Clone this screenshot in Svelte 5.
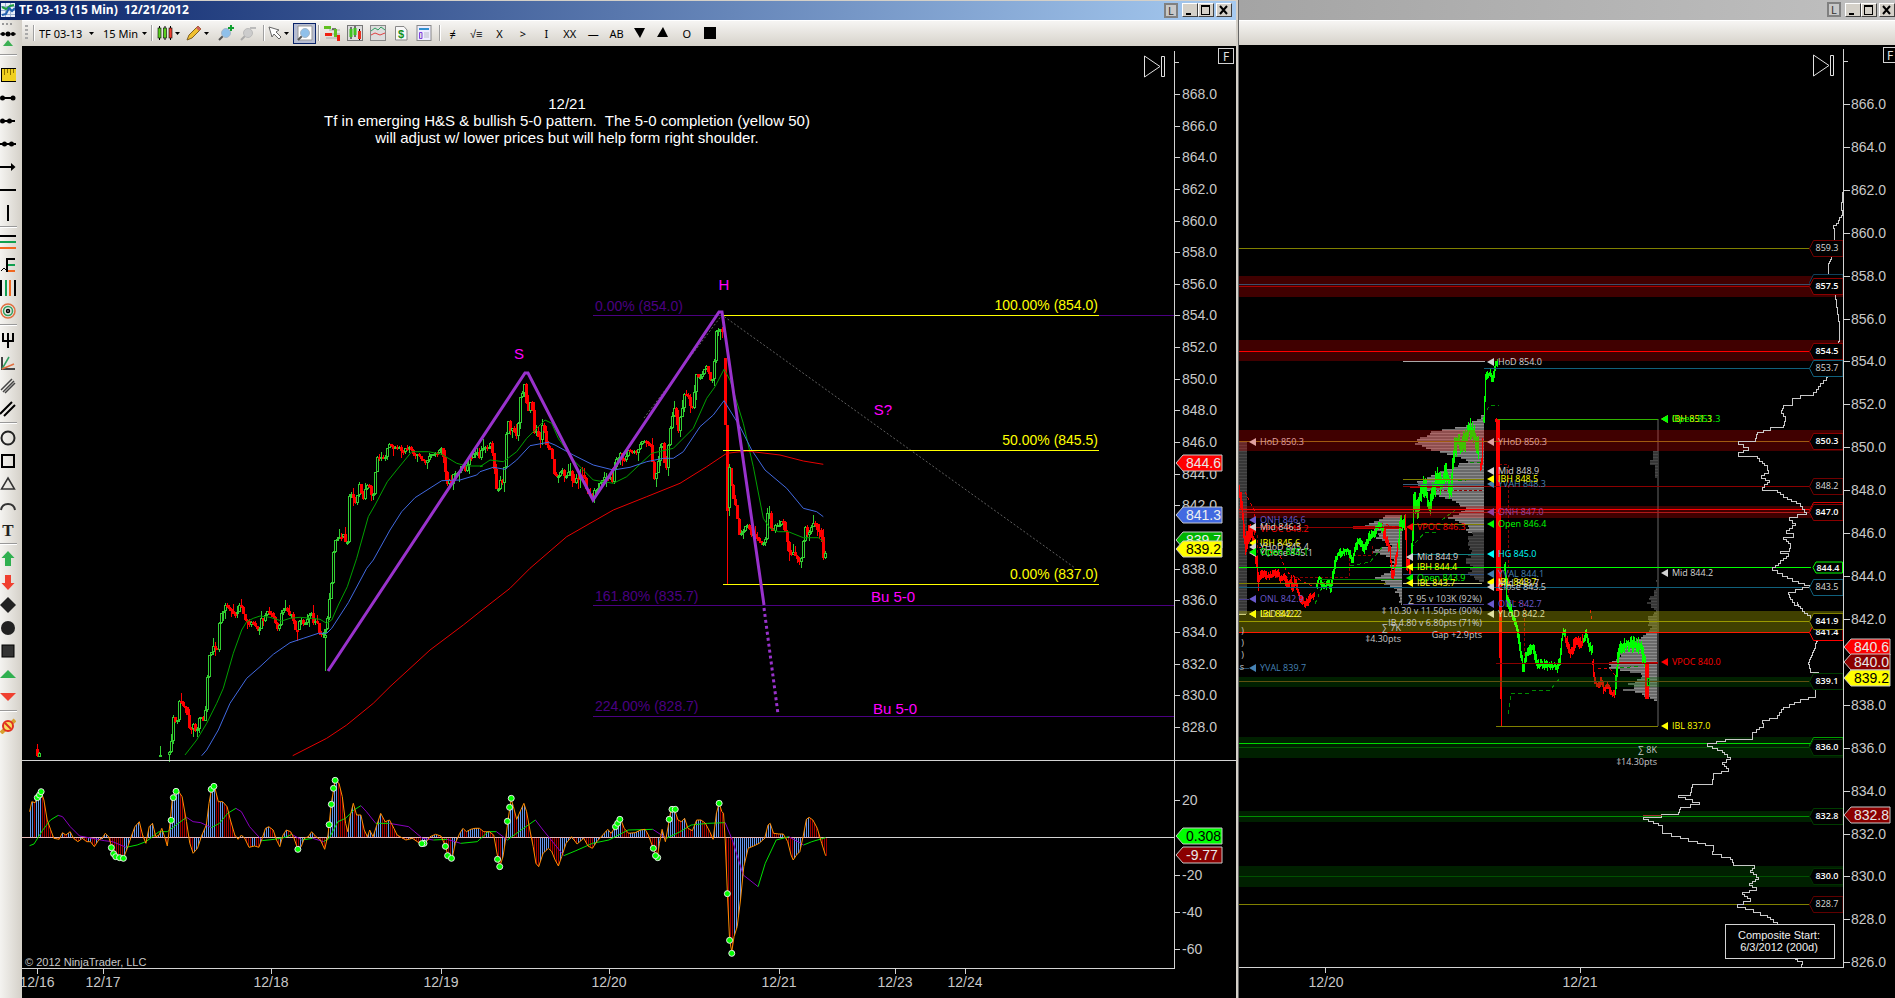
<script>
  // ---------- helpers ----------
  const at = (ox, oy, sx, sy, flat) => {
    const out = [];
    for (let i = 0; i < flat.length; i += 2) out.push([ox + flat[i] / sx, oy + flat[i + 1] / sy]);
    return out;
  };
  const poly = (pts) => pts.map((p) => p[0].toFixed(1) + ',' + p[1].toFixed(1)).join(' ');
  const lerp = (pts, x) => {
    if (x <= pts[0][0]) return pts[0][1];
    for (let i = 1; i < pts.length; i++) {
      if (x <= pts[i][0]) {
        const [a, b] = pts[i - 1];
        const [c, d] = pts[i];
        return c === a ? d : b + ((d - b) * (x - a)) / (c - a);
      }
    }
    return pts[pts.length - 1][1];
  };
  let seed = 7;
  const rnd = () => {
    seed = (seed * 16807) % 2147483647;
    return seed / 2147483647;
  };

  // ---------- 15 minute candles ----------
  const rally = at(130, 420, 3, 3, [
    118, 1005, 122, 1000, 125, 955, 128, 890, 132, 885, 137, 905, 142, 900, 148, 840, 152, 835, 158, 865, 166, 855, 172, 880, 178, 925,
    184, 935, 190, 912, 197, 935, 204, 925, 210, 890, 216, 885, 222, 912, 228, 855, 232, 770, 238, 700, 244, 705, 250, 675, 256, 675,
    262, 695, 268, 605, 276, 580, 286, 560, 292, 555, 300, 575, 308, 575, 318, 588, 326, 555, 332, 555, 340, 580, 347, 605, 360, 610,
    370, 615, 380, 632, 388, 630, 394, 600, 404, 595, 414, 570, 420, 590, 427, 565, 434, 605, 442, 625, 450, 605, 456, 572, 466, 560,
    476, 575, 486, 590, 494, 620, 502, 630, 508, 600, 516, 595, 522, 612, 530, 600, 540, 580, 548, 590, 553, 620, 560, 590, 567, 630,
    574, 635, 580, 645, 584, 645, 590, 600, 597, 580, 600, 485, 606, 480, 608, 430, 612, 385, 618, 355, 626, 365, 632, 350, 640, 345,
    644, 375, 650, 370, 655, 350, 659, 215, 668, 215, 674, 255, 680, 255, 684, 200, 692, 200, 700, 240, 708, 200, 714, 197, 722, 205,
    727, 258, 732, 200, 738, 150, 743, 115, 750, 110, 758, 112, 766, 110, 772, 90, 780, 62, 788, 90, 796, 80, 806, 85, 820, 90, 834, 80,
    846, 90, 856, 105, 866, 112, 876, 115, 885, 122, 893, 115, 900, 100, 912, 100, 925, 100, 937, 85, 941, 110, 947, 160, 953, 190,
    960, 180, 966, 205, 972, 150, 980, 160, 988, 150, 996, 130, 1006, 155, 1014, 130, 1022, 110, 1030, 110, 1040, 95, 1050, 110, 1060, 80,
    1070, 90, 1079, 80
  ]);
  const topping = at(480, 280, 3, 3, [
    5, 520, 15, 500, 22, 520, 32, 495, 40, 520, 45, 590, 52, 635, 60, 600, 66, 620, 72, 580, 80, 450, 84, 420, 92, 455, 100, 445, 108, 470,
    116, 435, 120, 350, 126, 345, 132, 290, 136, 345, 144, 400, 150, 355, 158, 400, 164, 460, 172, 455, 180, 485, 188, 430, 194, 455,
    200, 505, 208, 500, 216, 520, 224, 585, 232, 585, 246, 575, 258, 585, 270, 570, 280, 605, 290, 600, 302, 590, 312, 590, 322, 630,
    334, 650, 346, 625, 360, 615, 372, 600, 386, 590, 398, 600, 408, 540, 420, 525, 434, 545, 448, 510, 460, 520, 472, 520, 482, 490,
    492, 485, 502, 480, 512, 500, 520, 560, 524, 600, 532, 570, 540, 510, 546, 470, 552, 540, 558, 575, 563, 520, 568, 470, 574, 430,
    580, 380, 588, 400, 596, 450, 604, 400, 612, 350, 622, 345, 632, 380, 640, 375, 648, 290, 656, 290, 664, 285, 672, 265, 680, 260,
    688, 285, 696, 300, 702, 280, 708, 150, 716, 145, 724, 155, 730, 150
  ]);
  const decline = at(480, 280, 3, 3, [
    748, 560, 756, 620, 762, 670, 770, 690, 778, 770, 786, 760, 794, 745, 804, 740, 812, 760, 822, 765, 832, 775, 846, 785, 856, 780,
    860, 705, 868, 700, 876, 750, 886, 740, 896, 735, 906, 715, 914, 745, 924, 790, 932, 830, 942, 820, 952, 835, 962, 845, 968, 810,
    974, 740, 984, 760, 994, 735, 1004, 730, 1014, 750, 1022, 760, 1028, 780, 1031, 850, 1036, 820
  ]);
  const candles = [];
  const addCandles = (pts) => {
    let prev = pts[0][1];
    const end = pts[pts.length - 1][0];
    for (let x = Math.round(pts[0][0]); x <= end; x += 2) {
      const c = lerp(pts, x + 0.5) + (rnd() - 0.5) * 5;
      const top = Math.round(Math.min(prev, c));
      const bot = Math.max(top + 2, Math.round(Math.max(prev, c)));
      const w1 = rnd() < 0.4 ? rnd() * 9 : rnd() * 2;
      const w2 = rnd() < 0.4 ? rnd() * 9 : rnd() * 2;
      candles.push({ x, top, bot, hi: Math.round(top - w1), lo: Math.round(bot + w2), up: c <= prev });
      prev = c;
    }
  };
  addCandles(rally);
  addCandles([rally[rally.length - 1], ...topping]);
  addCandles(decline);
  candles.push({ x: 725, top: 358, bot: 425, hi: 358, lo: 425, up: false });
  candles.push({ x: 727, top: 425, bot: 511, hi: 425, lo: 584, up: false });
  candles.push({ x: 729, top: 467, bot: 508, hi: 464, lo: 516, up: true });
  candles.push({ x: 325, top: 635, bot: 638, hi: 630, lo: 671, up: true });
  candles.push({ x: 37, top: 749, bot: 756, hi: 744, lo: 757, up: false });
  candles.push({ x: 39, top: 753, bot: 757, hi: 752, lo: 757, up: true });
  candles.push({ x: 160, top: 755, bot: 757, hi: 746, lo: 757, up: true });

  const fast = [
    ...at(130, 420, 3, 3, [165, 1005, 200, 960, 230, 910, 260, 850, 280, 805, 310, 700, 335, 630, 350, 605, 370, 595, 390, 588, 420, 592, 455, 603, 480, 595, 510, 592, 545, 595, 570, 598, 590, 610, 605, 600, 625, 555, 652, 500, 680, 415, 715, 290, 735, 255, 772, 185, 800, 150, 845, 95, 895, 95, 935, 103, 980, 130, 1010, 138, 1058, 138]),
    ...at(480, 280, 3, 3, [0, 560, 30, 540, 70, 545, 110, 515, 140, 475, 195, 420, 215, 430, 235, 475, 280, 540, 340, 600, 400, 610, 440, 590, 515, 520, 580, 505, 640, 445, 680, 355, 705, 320, 732, 268, 750, 300, 790, 430, 820, 560, 850, 715, 870, 745, 895, 755, 925, 755, 970, 773, 1015, 773, 1030, 785])
  ];
  const mid = [
    ...at(130, 420, 3, 3, [215, 1007, 230, 990, 265, 930, 300, 850, 350, 775, 390, 740, 430, 703, 480, 668, 520, 655, 565, 640, 590, 640, 605, 625, 655, 548, 710, 445, 730, 420, 780, 330, 815, 275, 855, 233, 935, 182, 990, 180, 1040, 165]),
    ...at(480, 280, 3, 3, [0, 575, 40, 562, 75, 568, 110, 540, 150, 497, 205, 487, 225, 495, 280, 525, 340, 555, 400, 570, 450, 562, 500, 545, 550, 535, 580, 535, 610, 515, 660, 440, 700, 405, 732, 362, 780, 440, 815, 510, 855, 570, 920, 625, 970, 685, 1010, 695, 1030, 710])
  ];
  const slow = [
    ...at(130, 420, 3, 3, [488, 1007, 590, 955, 650, 915, 730, 850, 780, 800, 900, 690, 1000, 615]),
    ...at(480, 280, 3, 3, [0, 995, 90, 925, 150, 865, 260, 770, 400, 690, 500, 650, 600, 610, 680, 560, 740, 520, 800, 513, 900, 525, 970, 543, 1030, 553])
  ];

  // ---------- oscillator ----------
  const osc = at(0, 760, 1.823, 3, [
    54, 155, 58, 125, 64, 128, 68, 115, 75, 95, 80, 120, 86, 180, 92, 208, 98, 235, 108, 238, 114, 218, 120, 225, 128, 215, 134, 235,
    142, 245, 150, 235, 158, 245, 165, 245, 172, 260, 180, 240, 186, 235, 192, 220, 198, 230, 204, 262, 210, 290, 218, 293, 225, 295,
    232, 265, 238, 235, 246, 200, 254, 185, 260, 225, 266, 250, 272, 200, 278, 190, 284, 230, 290, 225, 295, 205, 300, 230, 305, 258,
    310, 190, 314, 120, 320, 95, 326, 95, 332, 110, 340, 185, 346, 250, 352, 280, 360, 265, 368, 225, 376, 195, 381, 130, 386, 85,
    392, 85, 398, 125, 406, 125, 414, 140, 420, 180, 428, 225, 434, 238, 440, 225, 446, 235, 454, 262, 464, 258, 472, 262, 478, 235,
    484, 205, 490, 200, 498, 210, 504, 240, 510, 260, 516, 225, 522, 210, 530, 215, 536, 235, 543, 268, 549, 260, 555, 235, 562, 230,
    568, 215, 576, 230, 584, 240, 592, 268, 598, 225, 604, 130, 611, 62, 618, 70, 624, 110, 630, 190, 634, 215, 638, 170, 644, 130,
    650, 165, 658, 165, 664, 210, 670, 230, 674, 210, 680, 230, 686, 200, 694, 160, 702, 185, 710, 180, 718, 205, 724, 225, 740, 240,
    752, 235, 765, 250, 776, 248, 784, 230, 794, 223, 804, 228, 812, 258, 817, 290, 824, 297, 830, 250, 838, 220, 844, 205, 850, 215,
    858, 208, 866, 205, 874, 205, 882, 215, 892, 215, 900, 225, 908, 298, 911, 320, 917, 290, 922, 235, 926, 180, 932, 118, 936, 140,
    942, 178, 948, 155, 955, 130, 960, 155, 966, 210, 972, 260, 977, 310, 982, 320, 990, 280, 1000, 265, 1006, 275, 1012, 300, 1018, 318,
    1024, 290, 1032, 250, 1042, 230, 1052, 252, 1064, 235, 1072, 258, 1080, 265, 1088, 245, 1096, 230, 1108, 208, 1114, 220, 1120, 205,
    1126, 185, 1132, 180, 1138, 205, 1146, 220, 1158, 218, 1168, 210, 1176, 208, 1182, 225, 1190, 262, 1198, 295, 1202, 250, 1207, 208,
    1213, 245, 1218, 200, 1223, 150, 1230, 150, 1236, 180, 1242, 185, 1248, 175, 1254, 205, 1262, 212, 1270, 180, 1278, 180, 1286, 190,
    1294, 215, 1300, 238, 1306, 160, 1311, 130, 1316, 155, 1319, 160, 1322, 240, 1326, 400, 1330, 540, 1334, 575, 1338, 530, 1344, 500,
    1350, 420, 1356, 320, 1364, 265, 1374, 258, 1384, 250, 1394, 235, 1400, 195, 1404, 190, 1410, 220, 1420, 222, 1428, 222, 1436, 245,
    1442, 285, 1446, 300, 1452, 285, 1458, 275, 1464, 230, 1470, 178, 1475, 172, 1482, 180, 1490, 205, 1498, 250, 1505, 287
  ]);
  const bars = [];
  for (let x = 30; x <= 826; x += 2) {
    const y = lerp(osc, x + 0.5);
    const falling = y - lerp(osc, x - 1.5) > 0.2;
    bars.push({ x, y: Math.round(Math.min(y, 838)), h: Math.max(1, Math.round(Math.abs(y - 838))), falling });
  }
  const signal = at(0, 760, 1.823, 3, [
    54, 257, 62, 252, 78, 210, 92, 180, 106, 166, 114, 170, 128, 200, 145, 228, 168, 235, 190, 242, 205, 245, 230, 262, 250, 255, 266, 245,
    290, 215, 305, 215, 325, 190, 340, 172, 352, 185, 366, 188, 385, 203, 400, 190, 415, 160, 430, 145, 440, 155, 455, 200, 478, 242,
    500, 238, 520, 232, 532, 223, 550, 240, 570, 235, 590, 245, 600, 235, 616, 185, 630, 175, 645, 150, 658, 137, 668, 155, 685, 190,
    710, 190, 745, 200, 770, 235, 790, 240, 815, 238, 840, 250, 870, 245, 890, 215, 905, 215, 925, 240, 950, 210, 976, 180, 990, 210,
    1028, 287, 1050, 272, 1080, 250, 1110, 240, 1145, 210, 1190, 208, 1215, 235, 1240, 215, 1260, 195, 1290, 190, 1322, 188, 1335, 240,
    1355, 345, 1382, 380, 1395, 310, 1415, 240, 1438, 230, 1465, 255, 1480, 245, 1505, 233
  ]);
  const dots = at(0, 760, 1.823, 3, [
    68, 113, 72, 105, 75, 95, 203, 263, 207, 281, 211, 290, 218, 293, 225, 295, 312, 181, 316, 113, 321, 94, 385, 88, 390, 79, 543, 268,
    600, 194, 604, 133, 608, 85, 611, 61, 773, 250, 769, 251, 812, 259, 816, 287, 823, 295, 907, 298, 911, 320, 925, 184, 929, 142,
    932, 115, 1122, 200, 1126, 190, 1130, 178, 1199, 293, 1191, 265, 1195, 287, 1220, 178, 1225, 148, 1231, 148, 1311, 130, 1326, 401,
    1330, 541, 1334, 580
  ]);

  const leftY = (p) => Math.round(94 + (868 - p) * 15.82);
  const leftTicks = Array.from({ length: 21 }, (_, i) => 868 - i * 2).filter((p) => p !== 840);
  const oscTicks = [[20, 800], [-20, 875], [-40, 912], [-60, 949]];
  const leftDates = [['12/16', 37], ['12/17', 103], ['12/18', 271], ['12/19', 441], ['12/20', 609], ['12/21', 779], ['12/23', 895], ['12/24', 965]];
  const leftMarks = [
    ['844.6', 463, '#ff0000', '#e8e8e8'], ['841.3', 515, '#4169e1', '#f0f0f0'], ['839.7', 540, '#00b400', '#f0f0f0'],
    ['839.2', 549, '#ffff00', '#000'], ['0.308', 836, '#00ff00', '#000'], ['-9.77', 855, '#8b0000', '#e8e8e8']
  ];

  // ---------- profile chart ----------
  const rightY = (p) => Math.round(104 + (866 - p) * 21.457);
  const rightTicks = Array.from({ length: 21 }, (_, i) => 866 - i * 2).filter((p) => p !== 840);
  const bands = [
    [276, 21, '#ff0000'], [340, 21, '#ff0000'], [430, 21, '#ff0000'], [506, 12, '#ff0000'], [611, 21, '#ffff00'],
    [677, 10, '#008000'], [737, 21, '#008000'], [811, 11, '#008000'], [866, 21, '#008000']
  ];
  const levels = [
    [248, '#808000', 1239], [284, '#3d4f6b', 1239], [286, '#a80000', 1239], [351, '#ff0000', 1239], [368, '#10607c', 1484],
    [361, '#a8a8a8', 1403, 1485], [441, '#a05a10', 1239], [486, '#8b0000', 1403], [509, '#ff0000', 1239], [512, '#b01818', 1239],
    [567, '#00ff00', 1239], [587, '#10607c', 1239], [621, '#9a9a00', 1239], [632, '#ff1800', 1239], [681, '#605010', 1239],
    [743, '#00d800', 1239], [747, '#005800', 1239], [816, '#009000', 1239], [876, '#005000', 1239], [904, '#808000', 1239],
    [419, '#32b400', 1498, 1658], [527, '#8b0000', 1255, 1402], [583, '#808000', 1239, 1386], [579, '#008000', 1320, 1402],
    [479, '#808000', 1403, 1484], [484, '#3a5f80', 1403, 1484], [524, '#808000', 1411, 1484], [554, '#108080', 1411, 1484],
    [574, '#2f4f80', 1403, 1484], [583, '#c8c890', 1403, 1482], [604, '#483d8b', 1403, 1484], [663, '#8b0000', 1496, 1658],
    [726, '#808000', 1496, 1658], [599, '#483d8b', 1239, 1249], [614, '#d0d080', 1239, 1246], [668, '#27506e', 1239, 1249]
  ];
  const tags = [
    ['857.5', 282, '#10405c'], ['859.3', 248, '#700000'], ['857.5', 286, '#8b0000', 1], ['853.7', 368, '#10607c'], ['854.5', 351, '#8b0000', 1],
    ['850.3', 441, '#8b0000', 1], ['848.2', 486, '#700000'], ['847.0', 510, '#d00000'], ['847.0', 512, '#8b0000', 1], ['843.5', 587, '#10607c'],
    ['841.4', 632, '#ff0000', 1], ['841.9', 621, '#808000', 1], ['839.1', 681, '#003c00', 1], ['836.0', 745, '#00a000'], ['836.0', 747, '#003800', 1],
    ['832.8', 816, '#003c00', 1], ['830.0', 876, '#003000', 1], ['828.7', 904, '#600000']
  ];
  const rightMarks = [
    ['840.6', 647, '#ff0000', '#e8e8e8'], ['840.0', 662, '#8b0000', '#e8e8e8'], ['839.2', 678, '#ffff00', '#000'], ['832.8', 815, '#8b0000', '#e8e8e8']
  ];
  const silver = '#d3d3d3', slate = '#6a5acd', steel = '#4682b4', lime = '#00ff00', yel = '#ffff00', red = '#ff0000';
  const notes = [
    [1249, 'HoD 850.3', 442, '#e0a0a0'], [1249, 'ONH 846.6', 520, slate], [1249, 'VPOC 846.2', 529, red], [1249, 'Mid 846.3', 527, silver],
    [1249, 'IBH 845.6', 543, yel], [1249, 'YHoD 845.4', 547, silver], [1249, 'YClose 845.1', 553, silver], [1249, 'Open 845.1', 552, lime],
    [1249, 'ONL 842.9', 599, slate], [1249, 'LoD 842.2', 614, '#e0e0a0'], [1249, 'IBL 842.2', 614, yel], [1249, 'YVAL 839.7', 668, steel],
    [1406, 'VPOC 846.3', 527, red], [1406, 'Mid 844.9', 557, silver], [1406, 'IBH 844.4', 567, yel], [1406, 'Open 843.9', 578, lime], [1406, 'IBL 843.7', 583, yel],
    [1487, 'HoD 854.0', 362, silver], [1487, 'YHoD 850.3', 442, '#e0a0a0'], [1487, 'Mid 848.9', 471, silver], [1487, 'YVAH 848.3', 484, steel],
    [1487, 'IBH 848.5', 479, yel], [1487, 'ONH 847.0', 512, '#9040a0'], [1487, 'Open 846.4', 524, lime], [1487, 'HG 845.0', 554, '#00ffff'],
    [1487, 'YVAL 844.1', 574, steel], [1487, 'Mid 843.7', 583, silver], [1487, 'IBL 843.7', 582, yel], [1487, 'Close 843.5', 587, silver],
    [1487, 'ONL 842.7', 604, slate], [1487, 'YLoD 842.2', 614, '#e0e0a0'],
    [1661, 'IBH 851.3', 419, yel], [1661, 'Open 851.3', 419, lime], [1661, 'Mid 844.2', 573, silver], [1661, 'VPOC 840.0', 662, red], [1661, 'IBL 837.0', 726, yel]
  ];
  const stats = [
    ['∑ 95 v 103K (92%)', 1482, 599], ['‡ 10.30 v 11.50pts (90%)', 1482, 611], ['IB 4.80 v 6.80pts (71%)', 1482, 623], ['Gap +2.9pts', 1482, 635],
    ['∑ 7K', 1401, 628], ['‡4.30pts', 1401, 639], ['∑ 8K', 1657, 750], ['‡14.30pts', 1657, 762], [')', 1244, 631], [')', 1244, 643], [')', 1244, 655], ['s', 1244, 667]
  ];
  const shape = (edge, ox, oy, flat) => {
    const pts = at(ox, oy, 3, 3, flat);
    const byY = pts.map((p) => [p[1], p[0]]);
    let d = `M${edge} ${byY[0][0].toFixed(0)}`;
    for (let y = Math.round(byY[0][0]); y <= byY[byY.length - 1][0]; y += 2) {
      d += `H${Math.min(edge, Math.round(lerp(byY, y) + (rnd() - 0.5) * 5))}V${y + 2}`;
    }
    return d + `H${edge}Z`;
  };
  const profiles = [
    [shape(1402, 1235, 400, [455, 345, 440, 350, 425, 360, 400, 372, 390, 380, 430, 390, 435, 400, 425, 410, 455, 420, 465, 435, 400, 450, 440, 460, 470, 475, 470, 490, 475, 505, 450, 520, 410, 530, 440, 540, 455, 550, 475, 560, 493, 590, 498, 615]), 'url(#grey)'],
    [shape(1484, 1235, 400, [740, 45, 715, 65, 670, 80, 600, 90, 570, 105, 540, 125, 570, 140, 620, 155, 660, 165, 700, 180, 650, 200, 570, 230, 545, 250, 560, 265, 600, 280, 650, 300, 690, 320, 680, 335, 640, 348, 660, 360, 690, 372, 705, 395]), 'url(#grey)'],
    [shape(1484, 1235, 400, [705, 396, 710, 400, 695, 430, 712, 450, 692, 480, 715, 500, 700, 520, 745, 545]), 'url(#dim)'],
    [shape(1658, 1600, 600, [172, -60, 168, -40, 150, -10, 150, 0, 145, 15, 165, 25, 150, 50, 150, 70, 155, 95]), 'url(#dim)'],
    [shape(1658, 1600, 600, [135, 100, 100, 120, 70, 135, 60, 150, 60, 170, 28, 187, 28, 200, 80, 210, 130, 220, 120, 235, 85, 250, 110, 260, 65, 268, 120, 275, 150, 295, 172, 300]), 'url(#grey)'],
    ['M1239 441H1247V614H1239Z', 'url(#dim)'],
    ['M1657 419H1659V726H1657Z', '#333'],
    ['M1653 451H1658V478H1655V465H1650V460H1653Z', 'url(#dim)']
  ];
  const ribbon = (flat, fat = 6) => {
    const pts = at(1235, 400, 3, 3, flat);
    let d = '';
    let prev = pts[0][1];
    for (let x = Math.round(pts[0][0]); x <= pts[pts.length - 1][0] + 0.5; x++) {
      const y = lerp(pts, x);
      const a = Math.min(prev, y) - 1 - rnd() * fat;
      const b = Math.max(prev, y) + 1 + rnd() * fat;
      d += `M${x + 0.5} ${a.toFixed(0)}V${b.toFixed(0)}`;
      prev = y;
    }
    return d;
  };
  const ribbons = [
    [ribbon([12, 280, 20, 330, 25, 400, 30, 440, 38, 390, 48, 410, 55, 450, 62, 480, 70, 565], 9), red],
    [ribbon([72, 530, 80, 520, 95, 530, 110, 525, 125, 515, 135, 540, 145, 530, 155, 555, 165, 540, 170, 570, 178, 540, 185, 570, 195, 600, 210, 610, 225, 590, 238, 585], 4), red],
    [ribbon([242, 560, 250, 530, 258, 555, 270, 560, 278, 540, 285, 570, 292, 520, 300, 480, 308, 460, 325, 455, 335, 450, 350, 480, 360, 440, 370, 420, 385, 450, 400, 410, 415, 400, 430, 375, 445, 395], 4), lime],
    [ribbon([445, 400, 455, 430, 462, 450, 470, 540, 480, 480, 487, 440], 5), red],
    [ribbon([488, 440, 494, 350, 502, 380, 507, 360], 7), lime],
    [ribbon([509, 360, 512, 480, 520, 500, 528, 540], 9), red],
    [ribbon([529, 450, 535, 280, 545, 340, 555, 280, 567, 250, 580, 330, 590, 280, 605, 230, 615, 260, 630, 210, 645, 280, 655, 150, 665, 120, 675, 150, 690, 115, 700, 85, 715, 100, 730, 150], 11), lime],
    [ribbon([736, 200, 740, 170, 742, 80], 4), red],
    [ribbon([744, 60, 747, 0, 750, -70, 762, -80, 770, -60, 780, -105, 787, -115], 3), lime],
    [ribbon([784, 60, 788, 110, 790, 150], 2), red],
    [ribbon([808, 500, 813, 600, 825, 630, 845, 690, 857, 770, 862, 810, 870, 770, 890, 740, 905, 790, 925, 795, 965, 800, 972, 780, 980, 700, 990, 700], 5), lime],
    [ribbon([990, 720, 1005, 760, 1020, 720, 1035, 735, 1043, 720], 6), red],
    [ribbon([1045, 720, 1052, 700, 1060, 740, 1070, 755], 5), lime],
    [ribbon([1072, 790, 1075, 840, 1085, 860, 1095, 840, 1105, 870, 1115, 855, 1125, 880, 1137, 880], 4), red],
    [ribbon([1139, 860, 1148, 750, 1165, 735, 1180, 735, 1200, 730, 1215, 740, 1222, 770, 1230, 790], 8), lime]
  ];
  const steps = (pts) => {
    let d = `M${pts[0][0].toFixed(0)} ${pts[0][1].toFixed(0)}`;
    for (let i = 1; i < pts.length; i++) {
      const n = Math.max(1, Math.round(Math.abs(pts[i][1] - pts[i - 1][1]) / 2.5));
      for (let k = 1; k <= n; k++) {
        const x = pts[i - 1][0] + ((pts[i][0] - pts[i - 1][0]) * k) / n;
        const y = pts[i - 1][1] + ((pts[i][1] - pts[i - 1][1]) * k) / n;
        d += `V${y.toFixed(0)}H${x.toFixed(0)}`;
      }
    }
    return d;
  };
  const composite = steps([
    [1843, 184], [1841, 205], [1842, 212], [1838, 220],
    ...at(1640, 220, 3, 3, [580, 15, 583, 40, 580, 60, 572, 110, 563, 130, 563, 165, 585, 220, 590, 260, 597, 310, 598, 340, 593, 370, 593, 415, 558, 472, 540, 490, 520, 515, 480, 525, 455, 535, 455, 548, 430, 555, 422, 570, 435, 588, 430, 615, 390, 622, 350, 635, 345, 655, 295, 662, 325, 680, 295, 697, 350, 708, 380, 735, 383, 750, 362, 765, 388, 780, 365, 800, 410, 810, 440, 830, 480, 850, 497, 875, 447, 890, 465, 908, 438, 930, 460, 940, 430, 950, 450, 970, 447, 985, 420, 992, 445, 1000, 420, 1020, 415, 1030, 395, 1042, 440, 1068, 508, 1095, 445, 1115, 450, 1130, 470, 1155]),
    ...at(1600, 600, 3, 3, [590, 5, 605, 25, 630, 45, 650, 115, 640, 150, 625, 185, 630, 205, 655, 215, 645, 240, 645, 285, 600, 297, 550, 320, 530, 345, 485, 360, 490, 375, 455, 395, 455, 408, 375, 418, 320, 430, 365, 450, 390, 470, 365, 485, 385, 505, 340, 520, 335, 545, 275, 552, 270, 575, 235, 585, 298, 605, 240, 620, 235, 635, 130, 650, 160, 662, 185, 675, 185, 690, 240, 708, 290, 722, 340, 735, 335, 752, 390, 770, 400, 785, 462, 795, 450, 810, 475, 830, 447, 850, 467, 862, 425, 875, 450, 895, 410, 912, 460, 928, 500, 945, 530, 965, 535, 975, 560, 1020, 590, 1078, 605, 1082, 600, 1100])
  ]);

  const rail = [
    ['Ruler', 'ruler'], ['Line', 'seg'], ['Ray', 'ray'], ['Extended line', 'ext'], ['Arrow line', 'arrow'], ['Horizontal line', 'hline'], ['Vertical line', 'vline'], null,
    ['Fibonacci retracements', 'fibr'], ['Fibonacci extensions', 'fibe'], ['Fibonacci time', 'fibt'], ['Fibonacci circle', 'fibc'], null,
    ['Pitchfork', 'fork'], ['Gann fan', 'gann'], ['Regression channel', 'reg'], ['Trend channel', 'chan'], null,
    ['Ellipse', 'circle'], ['Rectangle', 'square'], ['Triangle', 'tri'], ['Arc', 'arc'], ['Text', 'text'], null,
    ['Arrow up', 'up'], ['Arrow down', 'down'], ['Diamond', 'diamond'], ['Dot', 'dot'], ['Square', 'block'], ['Triangle up', 'tup'], ['Triangle down', 'tdown'], null,
    ['Remove drawings', 'erase']
  ];
  const marks = ['≠', '√≡', 'X', '>', 'I', 'XX', '—', 'AB', 'down', 'up', 'O', 'box'];
</script>

{#snippet caret()}
  <svg class="caret" viewBox="0 0 5 3" aria-hidden="true"><path d="M0 0H5L2.5 3Z" /></svg>
{/snippet}

{#snippet controls()}
  <button class="win lock" aria-label="Link">L</button>
  <button class="win" aria-label="Minimize"><svg viewBox="0 0 14 12"><path d="M3 9H8V11H3Z" /></svg></button>
  <button class="win" aria-label="Maximize"><svg viewBox="0 0 14 12"><path fill-rule="evenodd" d="M2 1H11V11H2ZM3 3V10H10V3Z" /></svg></button>
  <button class="win close" aria-label="Close"><svg viewBox="0 0 14 12"><path d="M3 2L10 10M10 2L3 10" stroke="#000" stroke-width="2" /></svg></button>
{/snippet}

{#snippet glass(grey)}
  <path d="M1 15L6 10" stroke={grey ? '#aaa' : '#555'} stroke-width="2" />
  <circle cx="8" cy="8" r="4.5" fill={grey ? '#ccc' : '#8fc0ea'} stroke={grey ? '#bbb' : '#a8b8c8'} />
{/snippet}

{#snippet flag(x, m)}
  <path d="M{x} {m[1]}L{x + 7} {m[1] - 8}H{x + 46}V{m[1] + 8}H{x + 7}Z" fill={m[2]} stroke="#c8c8c8" />
  <text x={x + 10} y={m[1] + 5} fill={m[3]}>{m[0]}</text>
{/snippet}

<main class="desktop">
  <section class="window">
    <header class="title">
      <svg class="logo" viewBox="0 0 14 14"><rect width="14" height="14" fill="#e8eef8" /><path d="M0 3.5H14M0 7.5H14M0 11.5H14M4.5 0V14M9.5 0V14" stroke="#9ab0d0" /><path d="M1 4L5 6 9 3 13 2" fill="none" stroke="#20a040" stroke-width="2" /><path d="M1 12L5 11 8 5 11 8 14 5" fill="none" stroke="#2060b0" stroke-width="2" /></svg>
      <h1>TF 03-13 (15 Min)&nbsp; 12/21/2012</h1>
      {@render controls()}
    </header>
    <div class="body">
      <nav class="rail" aria-label="Drawing tools">
        <div class="railtop">
          <svg viewBox="0 0 16 30"><path d="M2 4H4M6 4H8M10 4H12" stroke="#999" stroke-width="2" /><path d="M0 14H16" stroke="#000" stroke-width="1" /><circle cx="3" cy="14" r="2" /><circle cx="8" cy="14" r="2.5" /><circle cx="13" cy="14" r="2" /><path d="M3 26L8 20 13 26Z" fill="#3cb054" /></svg>
        </div>
        <hr />
        {#each rail as item, i (i)}
          {#if item}
            <button aria-label={item[0]}>
              <svg viewBox="0 0 16 16" fill="none" stroke="#000" stroke-width="2">
                {#if item[1] === 'ruler'}<rect x="1.5" y="1.5" width="16" height="13" fill="#f0d020" stroke-width="1" /><path d="M4.5 2V8M7.5 2V6M10.5 2V8M13.5 2V6" stroke="#8a7000" stroke-width="1" />
                {:else if item[1] === 'seg'}<path d="M2 8H14" /><circle cx="2.5" cy="8" r="2.5" fill="#000" stroke="none" /><circle cx="13" cy="8" r="2.5" fill="#000" stroke="none" />
                {:else if item[1] === 'ray'}<path d="M2 8H15" /><circle cx="2.5" cy="8" r="2.5" fill="#000" stroke="none" /><circle cx="9.5" cy="8" r="2.5" fill="#000" stroke="none" />
                {:else if item[1] === 'ext'}<path d="M0 8H16" /><circle cx="4.5" cy="8" r="2.5" fill="#000" stroke="none" /><circle cx="11.5" cy="8" r="2.5" fill="#000" stroke="none" />
                {:else if item[1] === 'arrow'}<path d="M0 8H12" /><path d="M11 4L15.5 8 11 12Z" fill="#000" stroke="none" />
                {:else if item[1] === 'hline'}<path d="M0 8H16" />
                {:else if item[1] === 'vline'}<path d="M8 0V16" />
                {:else if item[1] === 'fibr'}<path d="M0 2H16" /><path d="M0 8H16" stroke="#10a050" /><path d="M0 14H16" stroke="#f06820" />
                {:else if item[1] === 'fibe'}<path d="M15 2H7V15" /><path d="M8 8H15" stroke="#10a050" /><path d="M8 14H15" stroke="#f06820" /><path d="M1 14L4 11 6 13" stroke-width="1" />
                {:else if item[1] === 'fibt'}<path d="M1 0V16M15 0V16" /><path d="M6 0V16" stroke="#10a050" /><path d="M10 0V16" stroke="#f06820" />
                {:else if item[1] === 'fibc'}<circle cx="8" cy="8" r="7" stroke="#e07040" stroke-width="1.5" /><circle cx="8" cy="8" r="4.5" stroke="#30a060" stroke-width="1.5" /><circle cx="8" cy="8" r="1.5" stroke-width="1.5" />
                {:else if item[1] === 'fork'}<path d="M3 1V9H13V1M8 1V16" />
                {:else if item[1] === 'gann'}<path d="M2 2V14H15" stroke="#444" /><path d="M2 14L9 2" stroke="#30a060" stroke-width="1.5" /><path d="M2 14L14 9" stroke="#e07040" stroke-width="1.5" />
                {:else if item[1] === 'reg'}<path d="M1 12L12 1M3 14L14 3M5 15L15 5" stroke="#444" stroke-width="1.5" />
                {:else if item[1] === 'chan'}<path d="M0 13L12 1M4 15L15 4" />
                {:else if item[1] === 'circle'}<circle cx="8" cy="8" r="6.5" stroke="#222" />
                {:else if item[1] === 'square'}<rect x="2" y="2" width="12" height="12" />
                {:else if item[1] === 'tri'}<path d="M8 2L14.5 13H1.5Z" stroke="#333" stroke-width="1.5" />
                {:else if item[1] === 'arc'}<path d="M1 11Q2 5 8 5T15 11" stroke="#333" />
                {:else if item[1] === 'text'}<text x="8" y="14" text-anchor="middle" class="glyph">T</text>
                {:else if item[1] === 'up'}<path d="M8 0L14.5 7H11V15H5V7H1.5Z" fill="#30b050" stroke="none" />
                {:else if item[1] === 'down'}<path d="M8 16L14.5 9H11V1H5V9H1.5Z" fill="#f04030" stroke="none" />
                {:else if item[1] === 'diamond'}<path d="M8 0L16 8 8 16 0 8Z" fill="#222" stroke="none" />
                {:else if item[1] === 'dot'}<circle cx="8" cy="8" r="7" fill="#222" stroke="none" />
                {:else if item[1] === 'block'}<rect x="2" y="2" width="12" height="12" fill="#333" stroke-width="1" />
                {:else if item[1] === 'tup'}<path d="M0 12L8 4 16 12Z" fill="#30b050" stroke="none" />
                {:else if item[1] === 'tdown'}<path d="M0 4L8 12 16 4Z" fill="#f04030" stroke="none" />
                {:else}<path d="M1 15L15 2" stroke="#d8a030" stroke-width="4" /><circle cx="8" cy="8" r="5" stroke="#e03020" fill="#f8e060" /><path d="M5 5L11 11" stroke="#e03020" />{/if}
              </svg>
            </button>
          {:else}<hr />{/if}
        {/each}
      </nav>
      <div class="content">
        <div class="toolbar" role="toolbar" aria-label="Chart toolbar">
          <span class="grip"></span><i class="sep"></i>
          <label class="pick name"><select aria-label="Instrument"><option>TF 03-13</option></select>{@render caret()}</label>
          <label class="pick span"><select aria-label="Interval"><option>15 Min</option></select>{@render caret()}</label>
          <i class="sep"></i>
          <button class="menu" aria-label="Chart style"><svg viewBox="0 0 16 16"><g stroke="#000"><path d="M2.5 1V15M8 1V15M13.5 1V15" /><rect x="1" y="3" width="3" height="10" fill="#5ad020" stroke-width=".6" /><rect x="6.5" y="3" width="3" height="10" fill="#5ad020" stroke-width=".6" /><rect x="12" y="3" width="3" height="10" fill="#f04030" stroke-width=".6" /></g></svg>{@render caret()}</button>
          <button class="menu" aria-label="Draw"><svg viewBox="0 0 16 16"><path d="M1 15L3 10 12 1 15 4 6 13Z" fill="#f0c030" stroke="#806020" /><path d="M12 1L15 4 13 6 10 3Z" fill="#d06060" /></svg>{@render caret()}</button>
          <button class="zoomer" aria-label="Zoom in"><svg viewBox="0 0 16 16">{@render glass(false)}<path d="M10 3H16M13 0V6" stroke="#10a030" stroke-width="2" /></svg></button>
          <button class="zoomer" aria-label="Zoom out"><svg viewBox="0 0 16 16">{@render glass(true)}<path d="M10 3H16" stroke="#bbb" stroke-width="2" /></svg></button>
          <i class="sep near"></i>
          <button class="menu pointer" aria-label="Pointer"><svg viewBox="0 0 16 16"><path d="M2 2L12 5 9 7 14 12 12 14 7 9 5 12Z" fill="#fff" stroke="#666" /></svg>{@render caret()}</button>
          <button class="tool active" aria-label="Data box"><svg viewBox="0 0 16 16"><path d="M1 1H15V15H1Z" fill="#fff" stroke="#999" />{@render glass(false)}</svg></button>
          <i class="sep tight"></i>
          <button class="tool" aria-label="Chart trader"><svg viewBox="0 0 16 16"><path d="M5 5H16M5 9H16M2 13H16" stroke="#aaa" /><rect x="0" y="1" width="7" height="3" fill="#60c020" /><rect x="1" y="8" width="7" height="3" fill="#f02010" /><path d="M8 4H12" stroke="#000" /><rect x="10" y="4" width="3" height="8" fill="#60c020" /><rect x="13" y="10" width="3" height="6" fill="#f02010" /></svg></button>
          <button class="tool" aria-label="Data series"><svg viewBox="0 0 16 16"><rect x=".5" y=".5" width="15" height="15" fill="#ddd" stroke="#777" /><path d="M4 2V14M8 1V12M12.5 4V15" stroke="#000" /><path d="M2.5 4H5.5V12H2.5ZM6.5 3H9.5V10H6.5Z" fill="#40c020" /><path d="M11 6H14V14H11Z" fill="#e83020" /></svg></button>
          <button class="tool" aria-label="Indicators"><svg viewBox="0 0 16 16"><rect x=".5" y=".5" width="15" height="15" fill="#ddd" stroke="#888" /><path d="M1 6L5 3 8 5 11 2 15 5" fill="none" stroke="#30a060" /><path d="M1 10L5 8 10 10 15 8" fill="none" stroke="#e04040" /></svg></button>
          <button class="tool" aria-label="Strategies"><svg viewBox="0 0 16 16"><path d="M2.5 1.5H11L14 5V15H2.5Z" fill="#f8f8f8" stroke="#888" /><text x="8" y="13" text-anchor="middle" class="money">$</text></svg></button>
          <button class="tool" aria-label="Properties"><svg viewBox="0 0 16 16"><rect x="1" y=".5" width="14" height="15" fill="#eef" stroke="#888" /><rect x="3" y="3" width="10" height="2" fill="#3090d0" /><path d="M3.5 7.5H6V13.5H3.5Z" fill="#ddd" stroke="#8040e0" /><path d="M8 8H13M8 10H13M8 12H13" stroke="#bbc" /></svg></button>
          <i class="sep last"></i>
          <div class="marks">
            {#each marks as m (m)}
              <button aria-label={m}>
                {#if m === 'down'}<svg viewBox="0 0 12 12"><path d="M0 1H11L6 11Z" /></svg>
                {:else if m === 'up'}<svg viewBox="0 0 12 12"><path d="M0 10H11L6 0Z" /></svg>
                {:else if m === 'box'}<svg viewBox="0 0 12 12"><path d="M0 0H12V12H0Z" /></svg>
                {:else}{m}{/if}
              </button>
            {/each}
          </div>
        </div>

        <svg class="chart" viewBox="22 46 1214 952" role="img" aria-label="TF 03-13 15 minute chart">
          <rect x="22" y="46" width="1214" height="952" fill="#000" />
          <g shape-rendering="crispEdges">
            <path d="M593 315.5H1174M593 605.5H1174M593 716.5H1174" stroke="#4b0082" />
            {#each candles as c}
              {@const col = c.up ? '#32cd32' : '#ff0000'}
              <path d="M{c.x + 0.5} {c.hi}V{c.lo}" stroke={col} />
              {#if c.up}<rect x={c.x - 0.5} y={c.top + 0.5} width="2" height={Math.max(1, c.bot - c.top - 1)} fill="#000" stroke={col} />
              {:else}<rect x={c.x - 1} y={c.top} width="3" height={c.bot - c.top} fill={col} />{/if}
            {/each}
          </g>
          <polyline points={poly(fast)} fill="none" stroke="#00a000" />
          <polyline points={poly(mid)} fill="none" stroke="#4169e1" />
          <polyline points={poly(slow)} fill="none" stroke="#e80000" />
          <path d="M644 418L722 315L1075 568" fill="none" stroke="#606060" stroke-dasharray="2 2" />
          <path d="M723 315.5H1099M723 450.5H1099M723 584.5H1099" stroke="#ff0" shape-rendering="crispEdges" />
          <path d="M328 671L525 373H528L593 500L719 312H722L764 605" fill="none" stroke="#9932cc" stroke-width="3" />
          <path d="M764 608L778 714" stroke="#9932cc" stroke-width="3" stroke-dasharray="3 3" />

          <g class="axis" fill="#4b0082"><text x="595" y="311">0.00% (854.0)</text><text x="595" y="601">161.80% (835.7)</text><text x="595" y="711">224.00% (828.7)</text></g>
          <g class="axis" fill="#ff0" text-anchor="end"><text x="1098" y="310">100.00% (854.0)</text><text x="1098" y="445">50.00% (845.5)</text><text x="1098" y="579">0.00% (837.0)</text></g>
          <g class="note" fill="#f0f" text-anchor="middle"><text x="519" y="359">S</text><text x="724" y="290">H</text><text x="883" y="415">S?</text><text x="893" y="602">Bu 5-0</text><text x="895" y="714">Bu 5-0</text></g>
          <g class="note" fill="#fff" text-anchor="middle"><text x="567" y="109">12/21</text><text x="567" y="126">Tf in emerging H&amp;S &amp; bullish 5-0 pattern.&nbsp; The 5-0 completion (yellow 50)</text><text x="567" y="143">will adjust w/ lower prices but will help form right shoulder.</text></g>

          <g shape-rendering="crispEdges">
            {#each bars as b (b.x)}<rect x={b.x} y={b.y} width="1" height={b.h} fill={b.falling ? '#a00000' : '#6495ed'} />{/each}
            <path d="M22 760.5H1236M22 968.5H1174.5M826 837.5H1174" stroke="#d3d3d3" />
            <path d="M22 837.5H826" stroke="#e8b8b8" />
          </g>
          {#each signal.slice(1) as p, i (i)}
            <path d="M{signal[i][0]} {signal[i][1]}L{p[0]} {p[1]}" stroke={p[1] > signal[i][1] ? '#8a00c0' : '#00e000'} />
          {/each}
          <polyline points={poly(osc)} fill="none" stroke="#ff8c00" />
          {#each dots as d}<circle cx={d[0]} cy={d[1]} r="3" fill="#0f0" stroke="#e8e8e8" />{/each}

          <path d="M1174.5 51V969" stroke="#d3d3d3" shape-rendering="crispEdges" />
          <g class="axis" fill="#c8c8c8">
            <path d="M1175 62.5H1179" stroke="#d3d3d3" />
            {#each leftTicks as p (p)}<path d="M1175 {leftY(p) + 0.5}H1180" stroke="#d3d3d3" /><text x="1182" y={leftY(p) + 5}>{p.toFixed(1)}</text>{/each}
            {#each oscTicks as t (t[0])}<path d="M1175 {t[1] + 0.5}H1180" stroke="#d3d3d3" /><text x="1182" y={t[1] + 5}>{t[0]}</text>{/each}
            {#each leftDates as t (t[0])}<path d="M{t[1] + 0.5} 969V974" stroke="#d3d3d3" /><text x={t[1]} y="987" text-anchor="middle">{t[0]}</text>{/each}
          </g>
          <g class="axis">{#each leftMarks as m (m[0])}{@render flag(1176, m)}{/each}</g>
          <text class="copy" x="25" y="966" fill="#c8c8c8">© 2012 NinjaTrader, LLC</text>
          <path d="M1144.5 56L1160 66.5 1144.5 77ZM1161.5 56.5H1164.5V76.5H1161.5Z" fill="none" stroke="#e0e0e0" />
          <rect x="1218.5" y="48.5" width="15" height="15" fill="none" stroke="#d3d3d3" />
          <text class="ui" x="1226" y="61" fill="#e0e0e0" text-anchor="middle">F</text>
        </svg>
      </div>
    </div>
  </section>

  <section class="window second">
    <header class="title">{@render controls()}</header>
    <div class="toolbar bare"></div>
    <svg class="chart" viewBox="1239 45 656 953" role="img" aria-label="Volume profile chart">
      <defs>
        <pattern id="grey" width="4" height="3" patternUnits="userSpaceOnUse"><rect width="4" height="3" fill="#6a6a6a" /><rect width="4" height="1" y="1" fill="#8c8c8c" /></pattern>
        <pattern id="dim" width="4" height="3" patternUnits="userSpaceOnUse"><rect width="4" height="3" fill="#363636" /><rect width="4" height="1" y="1" fill="#484848" /></pattern>
      </defs>
      <rect x="1239" y="45" width="656" height="953" fill="#000" />
      <g shape-rendering="crispEdges">
        {#each profiles as p}<path d={p[0]} fill={p[1]} />{/each}
        <path d="M1353 526H1402V529H1353ZM1410 486H1440V488H1410ZM1609 662H1658V664H1609Z" fill="#c00000" />
        <path d="M1245 492L1254 510V545L1280 556L1287 572 1300 580 1312 586M1380 523L1396 527M1590 610L1592 622M1598 668H1609L1616 676" fill="none" stroke="#e00000" stroke-dasharray="3 3" />
        <path d="M1257 535V577H1349V555H1372V545M1430 516V490H1484M1499 464H1508V600L1524 604V663" fill="none" stroke="#8b0000" stroke-dasharray="3 2" />
        <path d="M1315 604L1325 580M1350 566L1370 562L1384 545M1411 548L1425 532H1437M1442 520L1455 510M1458 480H1466M1470 462H1482M1487 410L1490 405H1499M1508 714L1511 693H1532M1532 690H1550L1560 678M1620 668L1640 666" fill="none" stroke="#008c00" stroke-dasharray="4 3" />
        {#each ribbons as r}<path d={r[0]} stroke={r[1]} />{/each}
        <path d="M1496 419H1499V487H1500V570H1501V698H1500V657H1499V590H1497ZM1501 690V726M1646 663H1648V698H1645V663Z" fill="#f00" stroke="#f00" />
        <rect x="1647.5" y="678.5" width="2" height="7" fill="#000" stroke="#0f0" />
        {#each bands as b}<rect x="1239" y={b[0]} width="604" height={b[1]} fill={b[2]} fill-opacity="0.25" />{/each}
        {#each levels as l}<path d="M{l[2]} {l[0] + 0.5}H{l[3] ?? 1811}" stroke={l[1]} />{/each}
        <path d={composite} fill="none" stroke="#c8c8c8" />
        <path d="M1643 815.5H1662" stroke="#a03030" />
      </g>
      <g class="small" text-anchor="end" fill="#c8c8c8">{#each stats as s}<text x={s[1]} y={s[2] + 3}>{s[0]}</text>{/each}</g>
      <g class="small">
        {#each notes as n}<path d="M{n[0]} {n[2]}L{n[0] + 7} {n[2] - 4}V{n[2] + 4}Z" fill={n[3]} /><text x={n[0] + 11} y={n[2] + 3} fill={n[3]}>{n[1]}</text>{/each}
      </g>
      <g class="small" text-anchor="middle">
        {#each tags as t}
          <path d="M1809.5 {t[1] + 0.5}L1813.5 {t[1] - 7.5}H1843V{t[1] + 8.5}H1813.5Z" fill="#000" stroke={t[2]} />
          <text class:strong={t[3]} x="1827" y={t[1] + 3} fill={t[3] ? '#fff' : '#d8d8d8'}>{t[0]}</text>
        {/each}
        <path d="M1813 567.5L1816 562H1842.5V573H1816Z" fill="#000" stroke="#0f0" />
        <text class="strong" x="1828" y="571" fill="#fff">844.4</text>
      </g>
      <path d="M1239 967.5H1843.5V49" fill="none" stroke="#d3d3d3" shape-rendering="crispEdges" />
      <g class="axis" fill="#c8c8c8">
        <path d="M1844 61.5H1848" stroke="#d3d3d3" />
        {#each rightTicks as p (p)}<path d="M1844 {rightY(p) + 0.5}H1850" stroke="#d3d3d3" /><text x="1851" y={rightY(p) + 5}>{p.toFixed(1)}</text>{/each}
        <path d="M1325.5 968V973M1580.5 968V973" stroke="#d3d3d3" />
        <text x="1326" y="987" text-anchor="middle">12/20</text><text x="1580" y="987" text-anchor="middle">12/21</text>
      </g>
      <g class="axis">{#each rightMarks as m (m[0])}{@render flag(1844, m)}{/each}</g>
      <rect x="1725.5" y="924.5" width="109" height="34" fill="#000" stroke="#d3d3d3" />
      <g class="copy" fill="#f0f0f0" text-anchor="middle"><text x="1779" y="939">Composite Start:</text><text x="1779" y="951">6/3/2012 (200d)</text></g>
      <path d="M1813.5 55L1829 65.5 1813.5 76ZM1830.5 55.5H1833.5V75.5H1830.5Z" fill="none" stroke="#e0e0e0" />
      <rect x="1883.5" y="47.5" width="15" height="15" fill="none" stroke="#d3d3d3" />
      <text class="ui" x="1890" y="60" fill="#e0e0e0" text-anchor="middle">F</text>
    </svg>
  </section>
</main>

<style>
  :global(body) { background: #000; font-family: 'Noto Sans', sans-serif; overflow-x: hidden; }
  .desktop { display: grid; grid-template-columns: 1238fr 657fr; min-height: 100vh; overflow: hidden; }
  .window { display: flex; flex-direction: column; min-width: 0; border-right: 2px solid #d4d0c8; background: #000; }
  .second { border-right: 0; border-left: 1px solid #666; }
  .title { display: flex; align-items: center; height: 20px; box-sizing: border-box; border-top: 1px solid #d4d0c8; padding: 0 4px 1px 1px; background: linear-gradient(90deg, #0a246a, #a6caf0); }
  .second .title { justify-content: flex-end; border-top: 0; padding: 0 0 1px; background: linear-gradient(90deg, #a4a4a4, #c0c0c0); }
  .logo { width: 14px; height: 14px; }
  h1 { flex: 1; margin: 0 0 0 4px; font-size: 12px; line-height: 18px; font-weight: 700; color: #fff; white-space: nowrap; }
  button { font: inherit; border: 0; background: none; padding: 0; color: #000; display: flex; align-items: center; justify-content: center; }
  .win { width: 16px; height: 14px; box-sizing: border-box; flex: none; background: #d4d0c8; border: 1px solid; border-color: #fff #404040 #404040 #fff; }
  .win svg { width: 14px; height: 12px; }
  .lock { width: 14px; height: 15px; font-size: 11px; border: 2px solid #808080; color: #333; margin-right: 4px; background: #c8c8c8; }
  .close { margin-left: 2px; }
  .body { display: flex; flex: 1; }
  .rail { width: 22px; flex: none; background: linear-gradient(90deg, #f4f3f0, #d4d0c8); }
  .rail button { width: 17px; height: 23px; justify-content: flex-start; }
  .rail button svg { width: 16px; height: 16px; }
  .rail hr { width: 17px; height: 1px; margin: 2px 0; border: 0; border-top: 1px solid #999; background: #fff; }
  .railtop { height: 30px; padding: 0 0 4px; }
  .railtop svg { width: 16px; height: 30px; display: block; }
  .railtop + hr { margin: 0 0 7px; }
  .content { flex: 1; min-width: 0; }
  .toolbar { display: flex; align-items: center; height: 26px; box-sizing: border-box; padding-left: 3px; padding-bottom: 1px; font-size: 11px; background: linear-gradient(#f6f5f3, #d6d2ca); border-top: 1px solid #fff; overflow: hidden; }
  .bare { height: 25px; }
  .grip { width: 3px; height: 16px; background: repeating-linear-gradient(#aaa 0 2px, transparent 2px 4px); }
  .sep { flex: none; width: 1px; height: 16px; background: #a0a0a0; border-right: 1px solid #fff; margin: 0 4px 0 5px; }
  .near { margin: 0 2px 0 4px; }
  .tight { margin: 0 0 0 2px; }
  .last { margin: 0 0 0 4px; }
  .pick { display: flex; align-items: center; flex: none; }
  .name { width: 64px; }
  .span { width: 43px; }
  select { appearance: none; font: inherit; color: #000; border: 0; background: none; padding: 0; margin: 0 6px 0 0; }
  .span select { margin-right: 3px; }
  .caret { width: 5px; height: 3px; flex: none; }
  .menu { width: 29px; justify-content: flex-start; gap: 2px; }
  .pointer { width: 26px; gap: 1px; }
  .menu svg:first-child, .zoomer svg, .tool svg { width: 16px; height: 16px; flex: none; }
  .zoomer { width: 22px; }
  .tool { width: 23px; height: 21px; flex: none; }
  .active { border: 1px solid #0a246a; background: #b6bdd2; box-sizing: border-box; }
  .marks { display: grid; grid-template-columns: repeat(12, 1fr); width: 281px; }
  .marks svg { width: 12px; height: 12px; }
  .chart { display: block; width: 100%; height: auto; }
  .axis { font-family: 'Liberation Sans', sans-serif; font-size: 14px; }
  .note { font-family: 'Liberation Sans', sans-serif; font-size: 15px; }
  .copy { font-family: 'Liberation Sans', sans-serif; font-size: 11px; }
  .small { font-family: 'Open Sans', sans-serif; font-size: 9px; }
  .strong { font-weight: 600; }
  .ui { font-family: 'Noto Sans', sans-serif; font-size: 12px; }
  .glyph { font-family: 'Liberation Serif', serif; font-size: 17px; font-weight: 700; fill: #222; stroke: none; }
  .money { font-family: 'Liberation Sans', sans-serif; font-size: 11px; font-weight: 700; fill: #109020; }
</style>
